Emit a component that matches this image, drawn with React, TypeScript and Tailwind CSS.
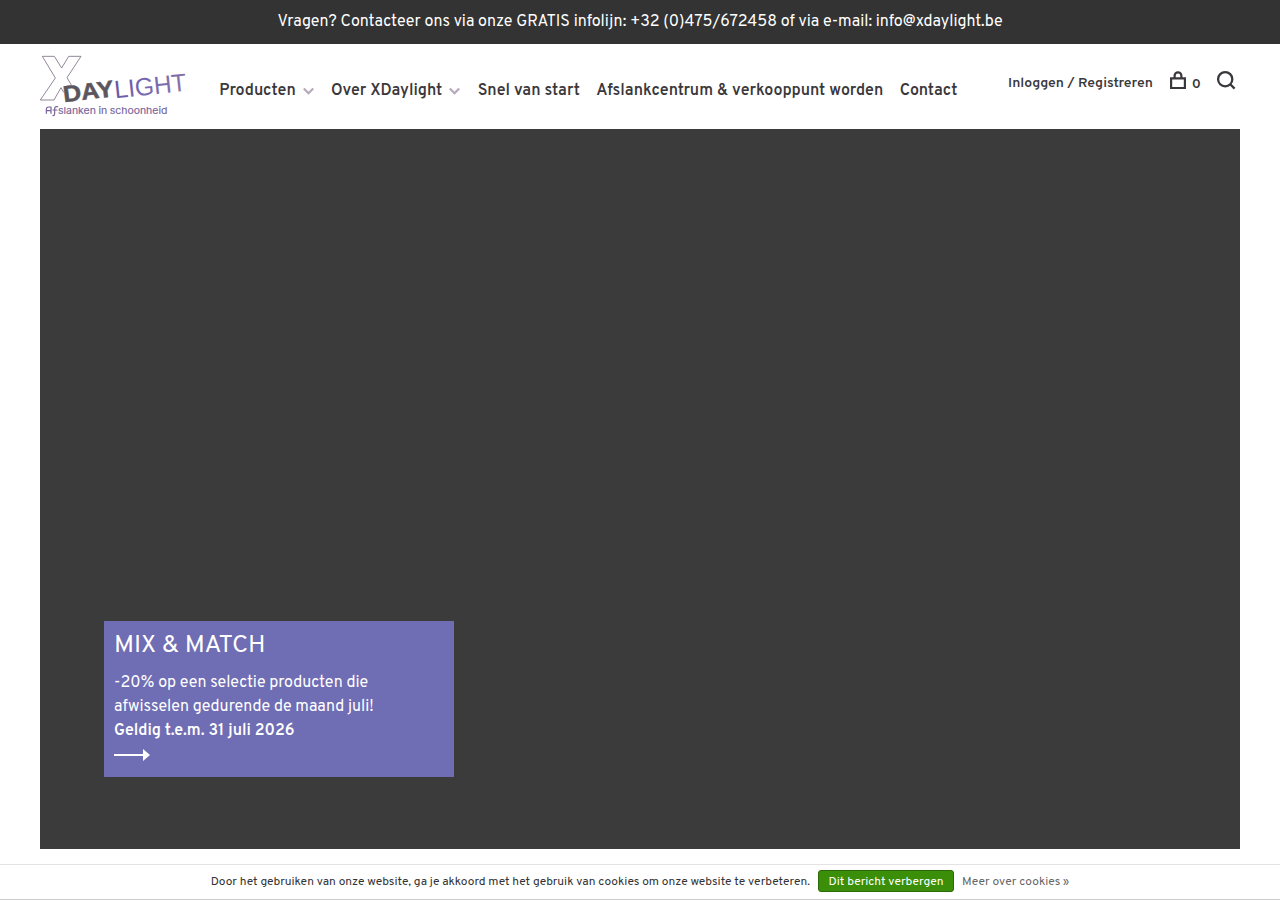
import type { ReactNode } from 'react';

function Logo() {
  return (
    <svg viewBox="30 30 450 192" className="block h-16 w-[150px]" role="img" aria-label="XDaylight">
      <defs>
        <linearGradient id="violet" x1="0" x2="1" y1="0" y2="0.3">
          <stop offset="0" stopColor="#65509d" />
          <stop offset="0.5" stopColor="#7467b2" />
          <stop offset="1" stopColor="#8571a6" />
        </linearGradient>
      </defs>
      <path
        d="M101 145L93 131L72 168H31L76 102L37 37H73L95 72L116 37H153L111 101L124 123"
        fill="none"
        stroke="#77677f"
        strokeWidth="2.4"
      />
      <g fontFamily="'Liberation Sans', Arial, sans-serif">
        <text x="102" y="175" transform="rotate(-7 102 175)" fontSize="69" fontWeight="700" fill="#5b555d" stroke="#5b555d" strokeWidth="1.5" textLength="152" lengthAdjust="spacingAndGlyphs">DAY</text>
        <text x="256" y="163" transform="rotate(-6 256 163)" fontSize="75" fill="url(#violet)" textLength="217" lengthAdjust="spacingAndGlyphs">LIGHT</text>
      </g>
      <g fill="none" stroke="#79649b" strokeWidth="3.6" strokeLinecap="round" strokeLinejoin="round">
        <path d="M49 208V196Q49 189 56 189H63V208M49 200H63" />
        <path d="M83 188H80Q74 188 74 194V209Q74 215 69 215M69 198H81" />
      </g>
      <text x="84" y="209" fontFamily="Inter, sans-serif" fontSize="28" wordSpacing="-1" fill="#79649b" stroke="#79649b" strokeWidth="0.4" textLength="328" lengthAdjust="spacingAndGlyphs">slanken in schoonheid</text>
    </svg>
  );
}

function Chevron() {
  return (
    <svg viewBox="0 0 12 8" className="ml-1.5 h-2 w-[13px] shrink-0" fill="none" stroke="#b5a9bb" strokeWidth="2.2">
      <path d="M1.3 1.5L6 6.2L10.7 1.5" />
    </svg>
  );
}

function NavItem({ children, arrow = false }: { children: ReactNode; arrow?: boolean }) {
  return (
    <a href="#" className="flex items-center whitespace-nowrap">
      <span>{children}</span>
      {arrow && <Chevron />}
    </a>
  );
}

export default function App() {
  return (
    <div className="flex h-[900px] flex-col overflow-hidden bg-white font-['Overpass','Roboto',sans-serif] text-[#3b383c]">
      <div className="flex h-11 shrink-0 items-start justify-center bg-[#333333] pt-2.5 text-base leading-6 text-white">
        <span className="whitespace-nowrap">
          Vragen? Contacteer ons via onze GRATIS infolijn: +32 (0)475/672458 of via e-mail: info@xdaylight.be
        </span>
      </div>

      <header className="mx-10 flex h-[85px] shrink-0 items-start">
        <div className="w-[150px] shrink-0 pt-2.5">
          <Logo />
        </div>
        <nav className="ml-[29.3px] flex gap-[16.4px] pt-[35px] text-base font-semibold leading-6">
          <NavItem arrow>Producten</NavItem>
          <NavItem arrow>Over XDaylight</NavItem>
          <NavItem>Snel van start</NavItem>
          <NavItem>Afslankcentrum &amp; verkooppunt worden</NavItem>
          <NavItem>Contact</NavItem>
        </nav>
        <div className="ml-auto flex items-start pr-1 text-sm font-semibold leading-5">
          <a href="#" className="mt-[30px] whitespace-nowrap">Inloggen / Registreren</a>
          <a href="#" className="ml-4 mt-[26px] flex">
            <svg viewBox="0 0 18 20" className="h-5 w-[18px]" fill="none" stroke="#3b383c" strokeWidth="2.2">
              <path d="M2.1 8.3H15.9V18H2.1Z M5.6 8.3V5.7A3.4 3.4 0 0 1 12.4 5.7V8.3" />
            </svg>
            <span className="ml-[5px] mt-[5px]">0</span>
          </a>
          <a href="#" className="ml-[15px] mt-[26px]">
            <svg viewBox="0 0 20 20" className="size-5" fill="none" stroke="#3b383c" strokeWidth="2.3">
              <circle cx="9.2" cy="9.2" r="7.1" />
              <path d="M14 14L18.6 18.6" />
            </svg>
          </a>
        </div>
      </header>

      <main className="mx-10 flex h-[720px] shrink-0 items-end bg-[#3b3b3b] pb-[72px] pl-16">
        <a href="#" className="block h-[156px] w-[350px] bg-[#6f6db3] px-2.5 pt-[9px] text-white">
          <h2 className="text-[25px] leading-8">MIX &amp; MATCH</h2>
          <p className="mt-[9px] whitespace-nowrap text-base leading-6">
            -20% op een selectie producten die
            <br />
            afwisselen gedurende de maand juli!
            <br />
            <strong className="font-semibold">Geldig t.e.m. 31 juli 2026</strong>
          </p>
          <svg viewBox="0 0 36 12" className="mt-1.5 h-3 w-9" fill="white">
            <path d="M0 5H29V0L36 6L29 12V7H0Z" />
          </svg>
        </a>
      </main>

      <footer className="mt-[15px] flex h-9 shrink-0 items-start justify-center border-b border-t border-b-[#cccccc] border-t-[#e3e3e3] pt-[5px] text-xs leading-[22px]">
        <span className="mt-px whitespace-nowrap text-[#333333]">
          Door het gebruiken van onze website, ga je akkoord met het gebruik van cookies om onze website te verbeteren.
        </span>
        <a href="#" className="ml-2 flex h-[22px] w-[136px] items-center justify-center whitespace-nowrap rounded-[3px] border border-[#2a6a08] bg-[#3b8f08] pt-0.5 text-white">
          Dit bericht verbergen
        </a>
        <a href="#" className="ml-2 mt-px whitespace-nowrap text-[#666666]">Meer over cookies »</a>
      </footer>
    </div>
  );
}
